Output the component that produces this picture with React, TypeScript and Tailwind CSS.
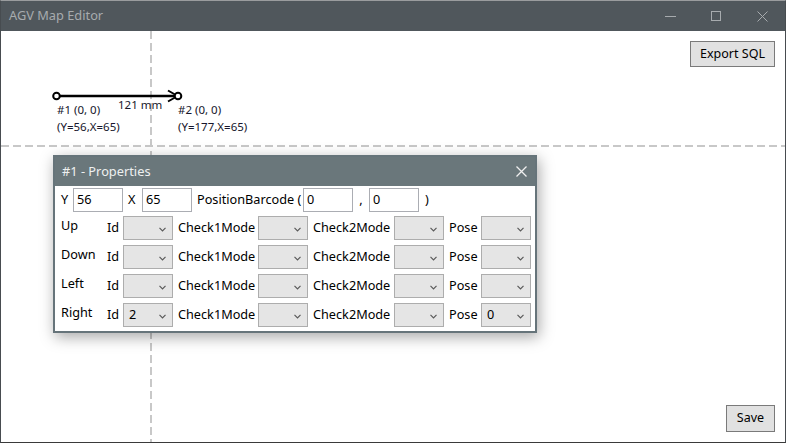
import React from "react";

const font = { fontFamily: '"Noto Sans", "Open Sans", sans-serif' };

const directions = [
  { name: "Up", id: "", pose: "" },
  { name: "Down", id: "", pose: "" },
  { name: "Left", id: "", pose: "" },
  { name: "Right", id: "2", pose: "0" },
];

const Chevron: React.FC = () => (
  <svg width="7" height="5" viewBox="0 0 7 5" className="absolute right-[6px] top-[10px]">
    <path d="M0.5 0.8 L3.5 3.8 L6.5 0.8" fill="none" stroke="#5a5a5a" strokeWidth="1.2" />
  </svg>
);

const Select: React.FC<{ value: string }> = ({ value }) => (
  <div className="relative flex h-[24px] w-[50px] shrink-0 items-center border border-[#adadad] bg-[#e5e5e5] pl-[5px]">
    {value}
    <Chevron />
  </div>
);

const Input: React.FC<{ value: string }> = ({ value }) => (
  <div className="flex h-[24px] w-[50px] shrink-0 items-center border border-[#abadb3] bg-white pl-[3px]">
    {value}
  </div>
);

const App: React.FC = () => {
  return (
    <div
      className="flex h-[443px] w-[786px] flex-col overflow-hidden border-x border-b border-t border-x-[#474c50] border-b-[#3a3a3a] border-t-[#9a9c9e] bg-white text-black"
      style={font}
    >
      {/* Title bar */}
      <div className="flex h-[30px] shrink-0 items-center bg-[#50575c]">
        <span className="flex-1 pl-[8px] text-[12.8px] text-[#a7abae]">AGV Map Editor</span>
        <div className="flex h-full">
          <div className="flex w-[46px] items-center justify-center">
            <div className="h-px w-[11px] bg-[#a7abae]" />
          </div>
          <div className="flex w-[46px] items-center justify-center">
            <div className="h-[10px] w-[10px] border border-[#a7abae]" />
          </div>
          <div className="flex w-[46px] items-center justify-center">
            <svg width="11" height="11" viewBox="0 0 11 11">
              <path d="M0.5 0.5 L10.5 10.5 M10.5 0.5 L0.5 10.5" stroke="#a7abae" strokeWidth="1" />
            </svg>
          </div>
        </div>
      </div>

      {/* Canvas */}
      <div className="relative flex flex-1 flex-col items-end justify-between p-[10px]">
        <svg className="absolute inset-0 h-full w-full" width="784" height="411">
          <line x1="150" y1="0" x2="150" y2="411" stroke="#c8c8c8" strokeWidth="2" strokeDasharray="8 4" />
          <line x1="0" y1="115" x2="784" y2="115" stroke="#c8c8c8" strokeWidth="2" strokeDasharray="8 4" />
          <line x1="56" y1="65" x2="176" y2="65" stroke="#000" strokeWidth="2.5" />
          <path d="M167 59.5 L176.5 65 L167 70.5" fill="none" stroke="#000" strokeWidth="2" />
          <circle cx="55.5" cy="65" r="3.3" fill="white" stroke="#000" strokeWidth="2" />
          <circle cx="177" cy="65" r="3.3" fill="white" stroke="#000" strokeWidth="2" />
        </svg>

        <div className="absolute left-[56px] top-[70px] text-[11.5px] leading-[17px] text-[#16162c]">
          <div>#1 (0, 0)</div>
          <div>(Y=56,X=65)</div>
        </div>
        <div className="absolute left-[117px] top-[65px] text-[11.5px] leading-[17px] text-[#16162c]">121 mm</div>
        <div className="absolute left-[177px] top-[70px] text-[11.5px] leading-[17px] text-[#16162c]">
          <div>#2 (0, 0)</div>
          <div>(Y=177,X=65)</div>
        </div>

        <button className="relative flex h-[26px] w-[85px] items-center justify-center border border-[#7a7a7a] bg-[#e1e1e1] text-[12.5px]">
          Export SQL
        </button>
        <button className="relative flex h-[27px] w-[49px] items-center justify-center border border-[#7a7a7a] bg-[#e1e1e1] text-[12.5px]">
          Save
        </button>

        {/* Properties dialog */}
        <div className="absolute left-[52px] top-[124px] flex w-[484px] flex-col border-2 border-[#66747a] bg-white shadow-[2px_4px_14px_rgba(0,0,0,0.35)]">
          <div className="flex h-[29px] items-center justify-between bg-[#6a777b] pl-[7px] pr-[8px]">
            <span className="text-[12.8px] text-[#eef0f0]">#1 - Properties</span>
            <svg width="11" height="11" viewBox="0 0 11 11">
              <path d="M0.5 0.5 L10.5 10.5 M10.5 0.5 L0.5 10.5" stroke="#f0f0f0" strokeWidth="1.3" />
            </svg>
          </div>
          <div className="flex flex-col gap-[5px] pb-[4px] pl-[6px] pt-[2px] text-[12.7px]">
            <div className="mb-[-1px] flex h-[24px] items-center">
              <span className="w-[12px]">Y</span>
              <Input value="56" />
              <span className="ml-[5px] w-[14px]">X</span>
              <Input value="65" />
              <span className="ml-[5px] w-[106px] whitespace-nowrap">PositionBarcode (</span>
              <Input value="0" />
              <span className="w-[16px] text-center">,</span>
              <Input value="0" />
              <span className="ml-[6px]">)</span>
            </div>
            {directions.map((d) => (
              <div key={d.name} className="flex h-[24px] items-center">
                <span className="-mt-[4px] w-[46px]">{d.name}</span>
                <span className="w-[16px]">Id</span>
                <Select value={d.id} />
                <span className="ml-[5px] w-[80px]">Check1Mode</span>
                <Select value="" />
                <span className="ml-[5px] w-[81px]">Check2Mode</span>
                <Select value="" />
                <span className="ml-[5px] w-[32px]">Pose</span>
                <Select value={d.pose} />
              </div>
            ))}
          </div>
        </div>
      </div>
    </div>
  );
};

export default App;
